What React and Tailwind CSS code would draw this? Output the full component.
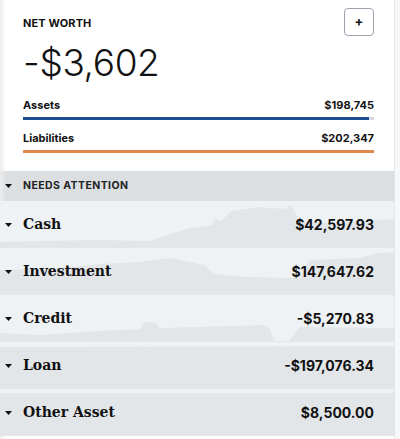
import React from 'react';

const sans = { fontFamily: 'Inter, "Open Sans", sans-serif' };

const rows = [
  {
    name: 'Cash',
    amount: '$42,597.93',
    path: 'M0,47 L0,41 L40,40 L100,39 L150,40 L190,27 L200,26 L212,24 L216,17 L222,20 L232,10 L260,6 L285,8 L292,4 L300,20 L330,22 L360,20 L395,18 L395,47 Z',
  },
  {
    name: 'Investment',
    amount: '$147,647.62',
    path: 'M0,47 L0,22 L60,20 L100,16 L140,14 L170,10 L190,14 L205,17 L215,26 L245,29 L300,30 L310,12 L360,10 L380,5 L395,4 L395,47 Z',
  },
  {
    name: 'Credit',
    amount: '-$5,270.83',
    path: 'M0,47 L0,38 L40,40 L100,36 L140,34 L145,27 L155,27 L160,33 L200,32 L265,30 L270,33 L275,46 L290,46 L300,32 L395,33 L395,47 Z',
  },
  {
    name: 'Loan',
    amount: '-$197,076.34',
    path: 'M0,47 L0,5 L395,4 L395,47 Z',
  },
  {
    name: 'Other Asset',
    amount: '$8,500.00',
    path: 'M0,47 L0,4 L395,4 L395,47 Z',
  },
];

const Caret = () => (
  <svg width="7" height="4" viewBox="0 0 7 4" className="shrink-0">
    <path d="M0,0 L7,0 L3.5,4 Z" fill="#111" />
  </svg>
);

const AccountRow = ({ row }) => (
  <div className="relative h-[47px] bg-[#eff2f5]">
    <svg
      className="absolute inset-0 w-full h-full"
      viewBox="0 0 395 47"
      preserveAspectRatio="none"
    >
      <path d={row.path} fill="#e3e6e9" />
    </svg>
    <div className="relative flex items-center h-full pl-[5px] pr-[20px]">
      <Caret />
      <span
        className="ml-[11px] text-[14px] font-bold text-[#111]"
        style={{ fontFamily: '"DejaVu Serif", serif' }}
      >
        {row.name}
      </span>
      <span className="ml-auto text-[14px] font-bold text-[#111]" style={sans}>
        {row.amount}
      </span>
    </div>
  </div>
);

export default function App() {
  return (
    <div className="w-[400px] h-[439px] flex bg-[#f6f7f8] overflow-hidden" style={sans}>
      <div className="relative w-[395px] h-full bg-white border-r border-[#e3e6e9]">
        <div className="absolute left-0 top-0 bottom-0 w-[6px] bg-gradient-to-r from-[#ececec] to-transparent pointer-events-none" />

        {/* Net worth summary */}
        <div className="pl-[23px] pr-[20px] pt-[8px]">
          <div className="flex items-start justify-between">
            <span className="mt-[7px] text-[11px] font-bold tracking-[0.01em] text-[#111]">
              NET WORTH
            </span>
            <button className="w-[30px] h-[28px] rounded-[4px] border border-[#9ca3af] bg-white flex items-center justify-center text-[13px] font-bold text-[#111]">
              +
            </button>
          </div>
          <div className="mt-[4px] text-[37px] font-light leading-[46px] text-[#111] tracking-[-0.01em]">
            -$3,602
          </div>
          <div className="mt-[12px] flex justify-between text-[11px] font-bold text-[#111] leading-[14px]">
            <span>Assets</span>
            <span>$198,745</span>
          </div>
          <div className="mt-[5px] h-[3px] flex">
            <div className="w-[346px] bg-[#1b4f91]" />
            <div className="flex-1 bg-[#d6dce4]" />
          </div>
          <div className="mt-[11px] flex justify-between text-[11px] font-bold text-[#111] leading-[14px]">
            <span>Liabilities</span>
            <span>$202,347</span>
          </div>
          <div className="mt-[5px] h-[3px] bg-[#e2874b]" />
        </div>

        {/* Accounts */}
        <div className="mt-[18px]">
          <div className="h-[30px] bg-[#dcdfe2] flex items-center pl-[5px]">
            <Caret />
            <span className="ml-[11px] text-[10.5px] font-bold tracking-[0.04em] text-[#222]">
              NEEDS ATTENTION
            </span>
          </div>
          {rows.map((row) => (
            <AccountRow key={row.name} row={row} />
          ))}
        </div>
      </div>
    </div>
  );
}
